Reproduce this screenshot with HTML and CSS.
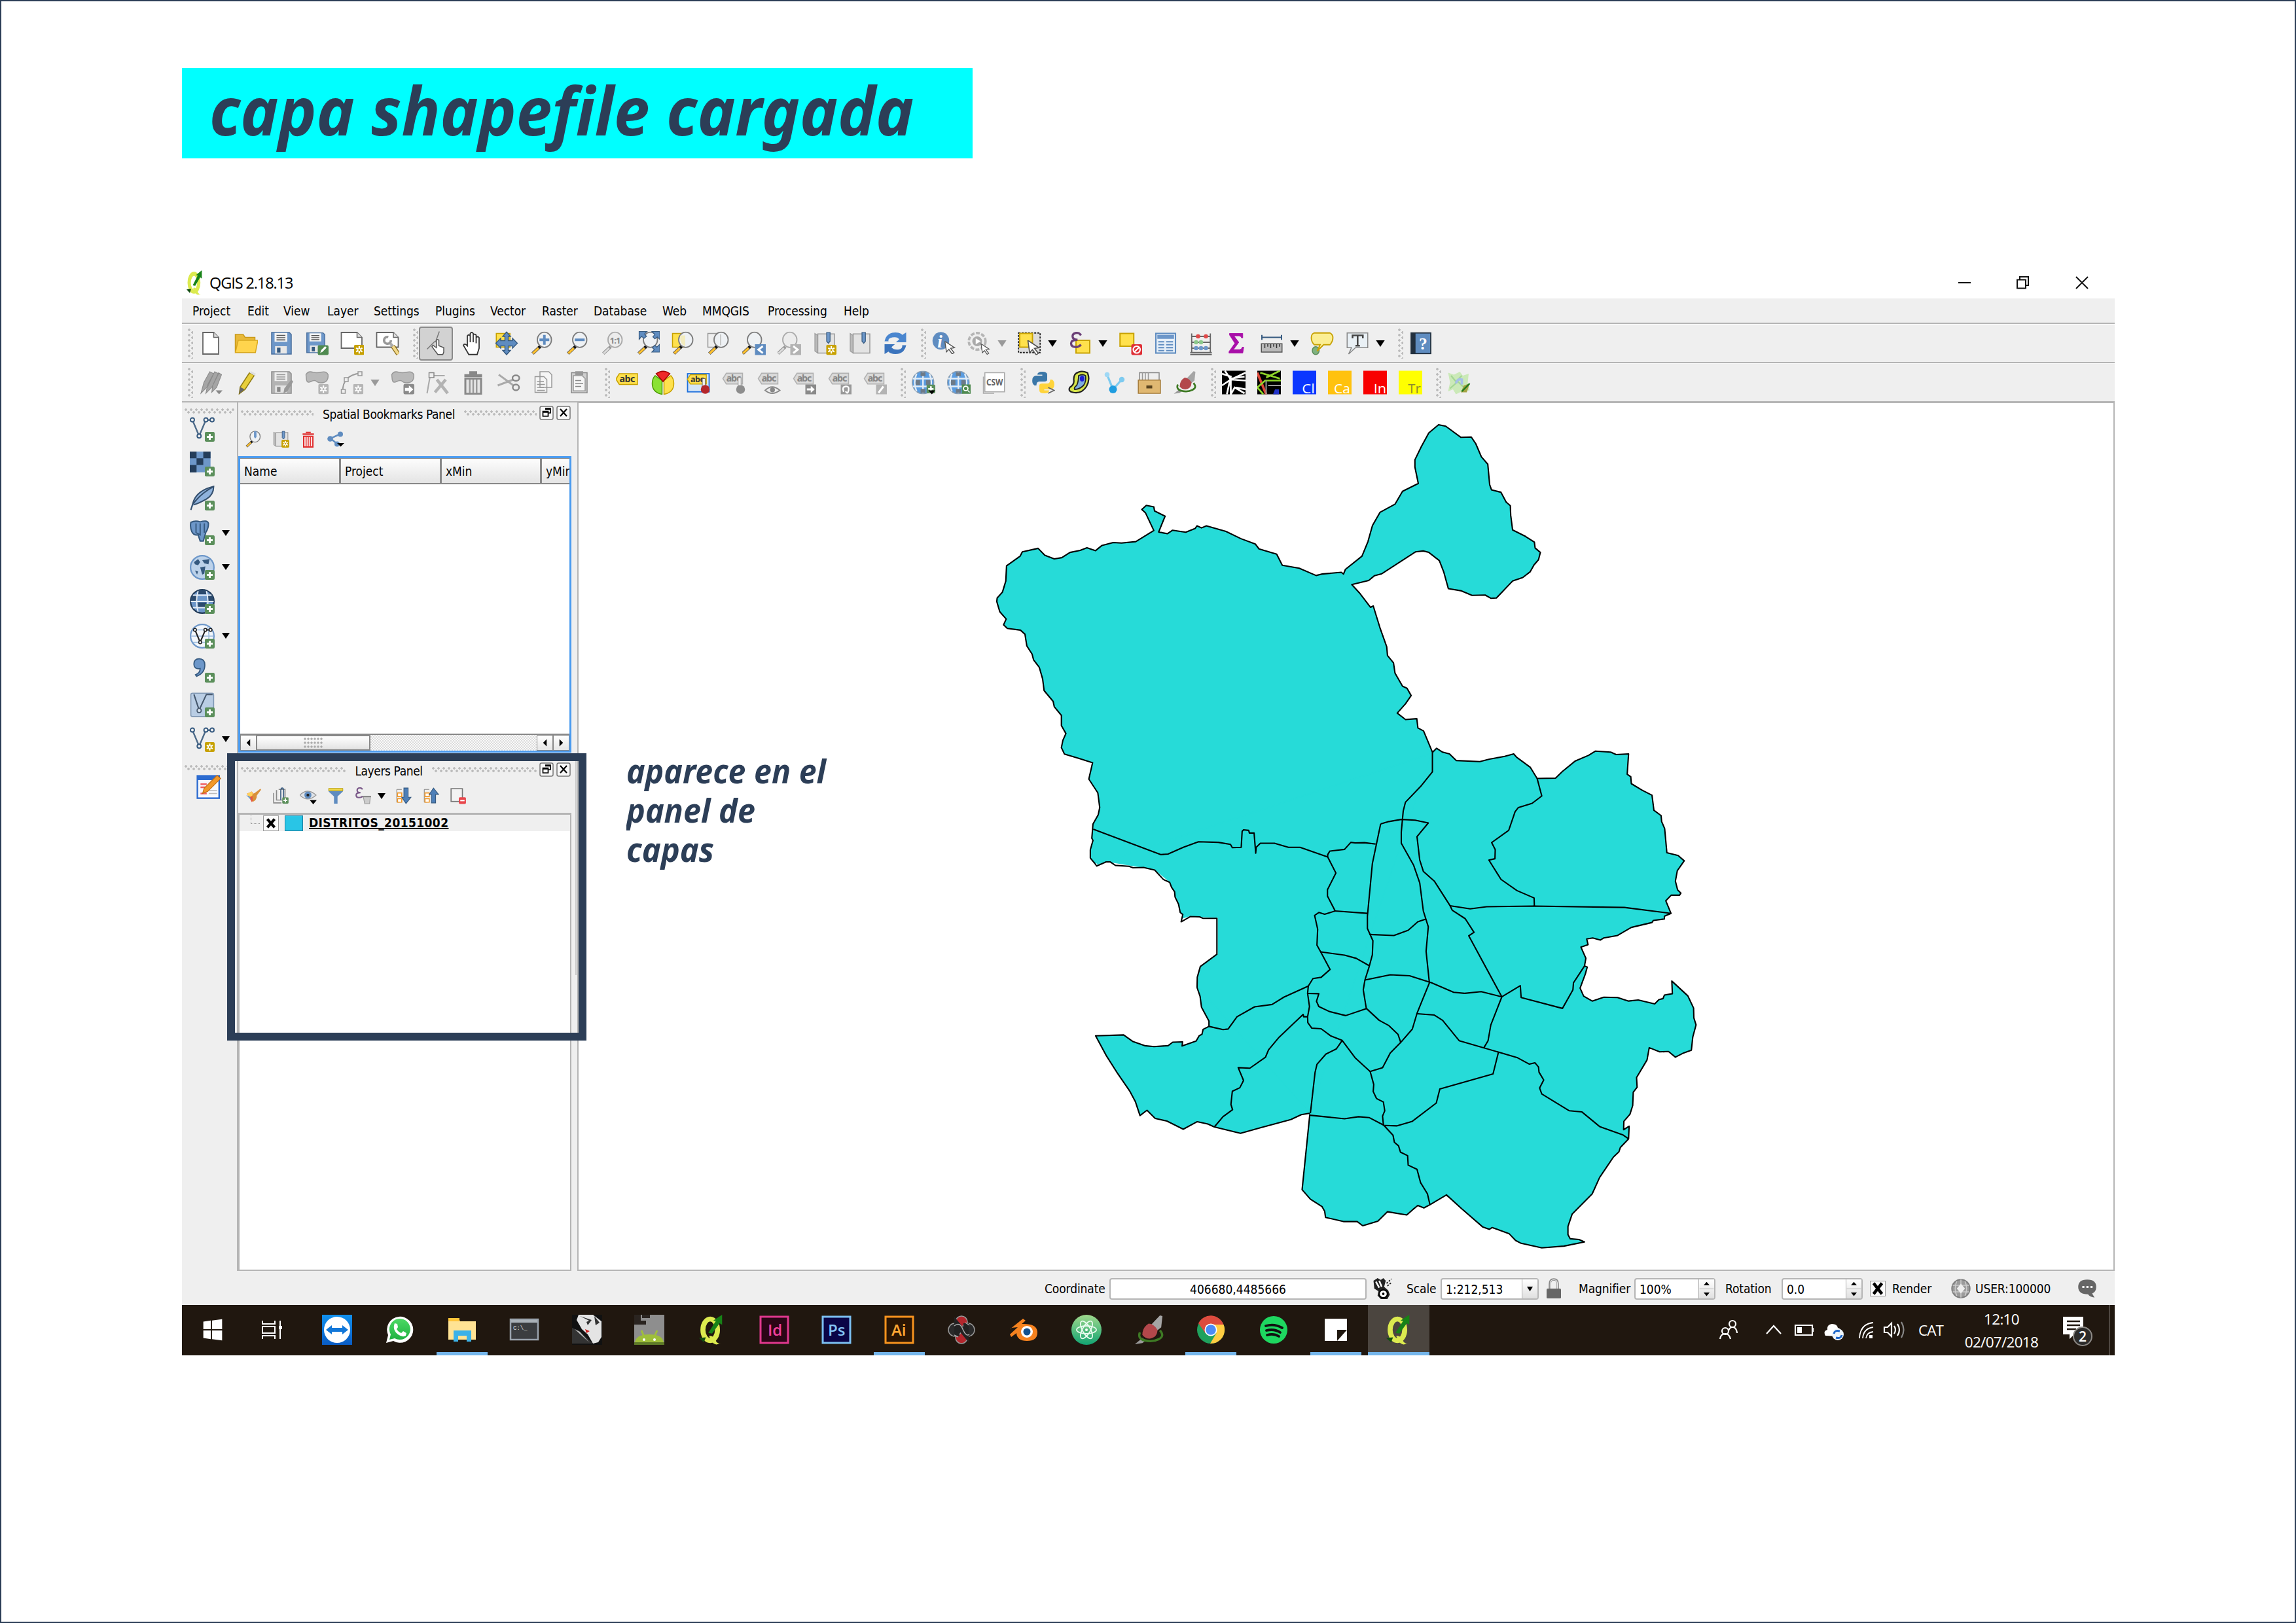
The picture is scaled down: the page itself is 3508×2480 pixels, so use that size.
FILE: index.html
```html
<!DOCTYPE html>
<html lang="es">
<head>
<meta charset="utf-8">
<title>capa shapefile cargada</title>
<link rel="stylesheet" href="styles.css">
</head>
<body>
<svg class="defs" aria-hidden="true">
  <defs>
    <linearGradient id="g-tv" x1="0" y1="0" x2="0" y2="1"><stop offset="0" stop-color="#1191ee"/><stop offset="1" stop-color="#0a5cc4"/></linearGradient>
    <linearGradient id="g-atom" x1="0" y1="0" x2="0" y2="1"><stop offset="0" stop-color="#9fd88c"/><stop offset="1" stop-color="#12a472"/></linearGradient>
    <linearGradient id="g-wa" x1="0" y1="0" x2="0" y2="1"><stop offset="0" stop-color="#4cd964"/><stop offset="1" stop-color="#1fb141"/></linearGradient>
  </defs>
  <symbol id="plus" viewBox="0 0 10 10"><rect width="10" height="10" rx="1.5" fill="#5b8f5b"/><path d="M5 2v6M2 5h6" stroke="#fff" stroke-width="2"/></symbol>
  <symbol id="star" viewBox="0 0 10 10"><rect width="10" height="10" rx="1.5" fill="#c7a100"/><path d="M5 1.500v7M2 3.200l6 3.600M8 3.200L2 6.800" stroke="#fff" stroke-width="1.400"/><circle cx="5" cy="5" r="1" fill="#c7a100"/></symbol>
  <symbol id="star-off" viewBox="0 0 10 10"><rect width="10" height="10" rx="1.5" fill="#b5b5b5"/><path d="M5 1.500v7M2 3.200l6 3.600M8 3.200L2 6.800" stroke="#fff" stroke-width="1.400"/><circle cx="5" cy="5" r="1" fill="#b5b5b5"/></symbol>
  <symbol id="lens" viewBox="0 0 24 24"><path d="M10 15.500L2.500 22.500" stroke="#555" stroke-width="3.400"/><path d="M8.500 17L2.800 22.300" stroke="#fdbf2d" stroke-width="2.200"/><path d="M10.800 14.500l-2 2" stroke="#111" stroke-width="2.800"/><ellipse cx="14.500" cy="8.500" rx="7.200" ry="7.700" fill="#eef1f4" stroke="#7c7c7c" stroke-width="1.200"/></symbol>
  <symbol id="lens-off" viewBox="0 0 24 24"><path d="M10 15.500L2.500 22.500" stroke="#999" stroke-width="3.400"/><path d="M8.500 17L2.800 22.300" stroke="#ddd" stroke-width="1.800"/><ellipse cx="14.500" cy="8.500" rx="7.200" ry="7.700" fill="#ececec" stroke="#aaa" stroke-width="1.200"/></symbol>
  <symbol id="arrowptr" viewBox="0 0 12 12"><path d="M1 0l9 6-3.600.6 3.200 4-1.800 1.200-3-4.200L2.500 10z" fill="#fff" stroke="#555" stroke-width=".9"/></symbol>
  <symbol id="floppy" viewBox="0 0 24 24"><path d="M2 1h18l2 2v20H2z" fill="#6d97c9" stroke="#4a6f9d"/><rect x="5" y="1.500" width="13" height="9" fill="#f4f4f4"/><path d="M7 4h9M7 6.300h9M7 8.600h9" stroke="#555" stroke-width="1.100"/><rect x="5.500" y="15" width="12" height="7.500" fill="#e8e8e8"/><rect x="7.500" y="16.500" width="3.500" height="5" fill="#35597f"/></symbol>
  <symbol id="floppy-off" viewBox="0 0 24 24"><path d="M2 1h18l2 2v20H2z" fill="#b3b3b3" stroke="#8e8e8e"/><rect x="5" y="1.500" width="13" height="9" fill="#eee"/><path d="M7 4h9M7 6.300h9M7 8.600h9" stroke="#999" stroke-width="1.100"/><rect x="5.500" y="15" width="12" height="7.500" fill="#e4e4e4"/><rect x="7.500" y="16.500" width="3.500" height="5" fill="#888"/></symbol>
  <symbol id="tag" viewBox="0 0 24 24"><path d="M1 9.500L4.500 4H23v11H4.500z" fill="#ffe14d" stroke="#c7a100"/><text x="4.600" y="12.700" font-family="Noto Sans" font-weight="700" font-size="9.500" fill="#333" textLength="16">abc</text></symbol>
  <symbol id="tag-off" viewBox="0 0 24 24"><path d="M1 7L4.500 1.500H21v11H4.500z" fill="#dadada" stroke="#b0b0b0"/><text x="4.500" y="10.300" font-family="Noto Sans" font-weight="700" font-size="9.500" fill="#858585" textLength="15">abc</text></symbol>
  <symbol id="wms" viewBox="0 0 24 24"><ellipse cx="11.500" cy="12" rx="11" ry="11.500" fill="#5a9ce0" stroke="#8a9db0"/><path d="M1 8h21M1 16h21M11.500 1v22M5 3q-4 9 0 18M18 3q4 9 0 18" stroke="#e3edf6" stroke-width="1.600" fill="none"/><path d="M4 9.500h4.500v5H4zM14.500 9.500H19v5h-4.500zM9 1.500h5v4H9zM9 18.500h5v4H9z" fill="#6d7a87"/></symbol>
  <symbol id="bookmark" viewBox="0 0 24 24"><path d="M2 2v18l3 2V4z" fill="#bbb" stroke="#999" stroke-width=".8"/><path d="M5 2.500h17v19.500H5z" fill="#e3e3e3" stroke="#999"/><path d="M14 1h3.500v9l-1.700 2-1.800-2z" fill="#6d97c9" stroke="#35597f" stroke-width=".8"/></symbol>
  <symbol id="vee" viewBox="0 0 24 24"><path d="M2.500 3L9 18.500 15.500 3H22" fill="none" stroke="#4d6a88" stroke-width="1.500"/><g fill="#efefef" stroke="#35597f" stroke-width="1.200"><circle cx="2.500" cy="2.800" r="1.900"/><circle cx="15.500" cy="2.800" r="1.900"/><circle cx="21.500" cy="2.800" r="1.900"/><circle cx="9" cy="18.500" r="1.900"/></g></symbol>
  <symbol id="qlogo" viewBox="0 0 24 24"><ellipse cx="11" cy="12" rx="5.800" ry="8.600" fill="none" stroke="#dcea4f" stroke-width="4"/><path d="M10 17q3-1 5 3t5 2.500l-4 1.200q-3-.5-4-3z" fill="#dcea4f"/><path d="M9.500 14.500L15.500 5l-2-.5L20.500 0v8l-2-1.200-6 8.200z" fill="#178217"/><path d="M2 18.500l5.500-.5-1.500 4z" fill="#124d12"/></symbol>
  <symbol id="caret" viewBox="0 0 16 12"><path d="M0 0h16L8 12z" fill="currentColor"/></symbol>
  <symbol id="mana" viewBox="0 0 24 24"><path d="M13 9l8-8.500 2 .5-1 9-5 4z" fill="#a5a5a5"/><path d="M1 23.500l6-5 3 2-3 2z" fill="#999"/><path d="M5 14q-2 5 4 6.500t11-1 1-7" fill="none" stroke="#3e7a24" stroke-width="1.800"/><path d="M7 16q0-6 5-9 4 0 7 5 0 6-6 7-4 0-6-3z" fill="#b3474b"/></symbol>
  <symbol id="floaticon" viewBox="0 0 22 22"><rect x="1" y="1" width="20" height="20" rx="2.500" fill="#f8f8f8" stroke="#777" stroke-width="1.500"/><path d="M9 4h8v7h-3M9 5.500h8M5.500 8.500h8v7.500h-8zM5.500 10h8" fill="none" stroke="#000" stroke-width="1.700"/></symbol>
  <symbol id="closeicon" viewBox="0 0 22 22"><rect x="1" y="1" width="20" height="20" rx="2.500" fill="#f8f8f8" stroke="#777" stroke-width="1.500"/><path d="M6 5l10 11M16 5L6 16" stroke="#000" stroke-width="2.200"/></symbol>
</svg>

<main class="page">
  <h1 class="banner">
    <svg width="1208" height="138"><text x="42" y="103" font-size="103" textLength="1076" lengthAdjust="spacingAndGlyphs">capa shapefile cargada</text></svg>
  </h1>

  <section class="window">
    <header class="titlebar">
      <svg class="logo" viewBox="2 0 19 24" preserveAspectRatio="none"><use href="#qlogo" width="24" height="24"/></svg>
      <span class="title">QGIS 2.18.13</span>
      <svg class="controls" viewBox="0 0 220 40"><g fill="none" stroke="#111" stroke-width="2"><path d="M10 20h19"/><path d="M100 15.500h13v13h-13zM104 15v-4h13v13h-4M190 11l18 18M208 11l-18 18"/></g></svg>
    </header>

    <nav class="menubar">
      <span>Project</span><span>Edit</span><span>View</span><span>Layer</span><span>Settings</span><span>Plugins</span><span>Vector</span><span>Raster</span><span>Database</span><span>Web</span><span>MMQGIS</span><span>Processing</span><span>Help</span>
    </nav>

    <div class="toolbar">
      <i class="grip first"></i>
      <b><svg viewBox="0 0 24 24"><path d="M4 1h11l5 5v17H4z" fill="#fff" stroke="#666" stroke-width="1.200"/><path d="M15 1v5h5" fill="#ddd" stroke="#666"/></svg></b>
      <b><svg viewBox="0 0 24 24"><path d="M1 21V3h8l2 3h10v4" fill="#e8b93a" stroke="#c99a1b"/><path d="M1 21.500L4 9h20l-2.500 12.500z" fill="#ffd44d" stroke="#d9a81f"/></svg></b>
      <b><svg viewBox="0 0 24 24"><use href="#floppy"/></svg></b>
      <b><svg viewBox="0 0 24 24"><use href="#floppy" width="22" height="23"/><rect x="13" y="14" width="11" height="10" rx="1.500" fill="#4f8a50"/><path d="M15.500 22l1-3 4-4 1.500 1.500-4 4z" fill="#fff"/></svg></b>
      <b><svg viewBox="0 0 24 24"><path d="M1 1h16l5 5v11H1z" fill="#fff" stroke="#666" stroke-width="1.200"/><path d="M17 1v5h5" fill="#ddd" stroke="#666"/><use href="#star" x="14" y="13.500" width="10.500" height="10.500"/></svg></b>
      <b><svg viewBox="0 0 24 24"><path d="M1 1h17l5 5v10H1z" fill="#fff" stroke="#666" stroke-width="1.200"/><path d="M18 1v5h5" fill="#ddd" stroke="#666"/><circle cx="12" cy="9" r="3.500" fill="none" stroke="#999" stroke-width="2.500" stroke-dasharray="17 5"/><path d="M15 12.500l3 3" stroke="#aaa" stroke-width="3"/><path d="M17.500 15l5.500 8" stroke="#8a6d1e" stroke-width="4.500"/><path d="M17.500 15l5.500 8" stroke="#f2d98a" stroke-width="2.800"/></svg></b>
      <i class="grip"></i>
      <b class="on"><svg viewBox="0 0 24 24"><path d="M11.500 11l4-11M3 18l8-8" stroke="#777" stroke-width="1"/><path d="M14 23.500l-6-8 1-1.500 3.500 2.500V9q1.300-1.800 2.500 0v5.500l5 2v4.500l-1 2.500z" fill="#fff" stroke="#555" stroke-width="1"/></svg></b>
      <b><svg viewBox="0 0 24 24"><path d="M8 23.500L2.500 14q1-2.500 4 .5V4.500q1.500-2 3 0V11 2q1.500-2 3 0v9-7.500q1.500-1.500 3 .2V12 6q1.600-1.500 3 .3V17l-2 6.500z" transform="translate(1.500)" fill="#fff" stroke="#333" stroke-width="1.200"/></svg></b>
      <b><svg viewBox="0 0 24 24"><rect x="1.500" y="2" width="14" height="14" fill="#ffe14d" stroke="#c7a100"/><path d="M12 .5l4 4.500h-2.300v4.300H18V7l5 5-5 5v-2.300h-4.300v4.500H16l-4 4.500-4-4.500h2.300v-4.500H6V17l-5-5 5-5v2.300h4.300V5H8z" fill="#5f8cc0" stroke="#35597f" stroke-width=".9"/></svg></b>
      <b><svg viewBox="0 0 24 24"><use href="#lens"/><path d="M14.500 3.500v10M9.500 8.500h10" stroke="#5f8cc0" stroke-width="2.600"/></svg></b>
      <b><svg viewBox="0 0 24 24"><use href="#lens"/><path d="M9.500 8.500h10" stroke="#5f8cc0" stroke-width="2.600"/></svg></b>
      <b><svg viewBox="0 0 24 24"><use href="#lens-off"/><text x="9.200" y="12" font-family="Noto Sans" font-weight="700" font-size="8.500" fill="#888" textLength="11">1:1</text></svg></b>
      <b><svg viewBox="0 0 24 24"><use href="#lens"/><path d="M3 0h8L8.500 2.500l2 2.500-2.500 2-2.500-2L3 8zM24 0v8l-2.500-2.500-2.500 2-2-2 2-2.500L16 0zM24 21h-8l2.500-2.500-2-2 2.500-2.500 2 2L24 13z" fill="#5f8cc0" stroke="#35597f" stroke-width=".8"/></svg></b>
      <b><svg viewBox="0 0 24 24"><rect x="1" y="2" width="12" height="14" fill="#ffe14d" stroke="#c7a100"/><use href="#lens"/><path d="M9 4h5v11q-6-2-5-11z" fill="#f3ecbe"/></svg></b>
      <b><svg viewBox="0 0 24 24"><rect x="1" y="2" width="12" height="14" fill="#eee" stroke="#999"/><use href="#lens"/><path d="M14 3v11" stroke="#bbb"/></svg></b>
      <b><svg viewBox="0 0 24 24"><use href="#lens" x="-2"/><rect x="13" y="13" width="11" height="11" fill="#5f8cc0"/><path d="M21 15l-4.500 3.500L21 22" fill="none" stroke="#fff" stroke-width="2"/></svg></b>
      <b><svg viewBox="0 0 24 24"><use href="#lens-off" x="-2"/><rect x="13" y="13" width="11" height="11" fill="#b3b3b3"/><path d="M16 15l4.500 3.500L16 22" fill="none" stroke="#fff" stroke-width="2"/></svg></b>
      <b><svg viewBox="0 0 24 24"><use href="#bookmark"/><use href="#star" x="13.500" y="13.500" width="10.500" height="10.500"/></svg></b>
      <b><svg viewBox="0 0 24 24"><use href="#bookmark"/></svg></b>
      <b><svg viewBox="0 0 24 24"><path d="M1 10Q3 1 12 1q5 0 7 2.500L23 1v10H12.500l3.500-3Q14 5 9 6t-4 4z" fill="#4a86cf"/><path d="M23 14q-2 9-11 9-5 0-7-2.500L1 23V13h10.500L8 16q2.500 3 7 2.500t4-4.500z" fill="#3b74bd"/></svg></b>
      <i class="grip"></i>
      <b><svg viewBox="0 0 24 24"><ellipse cx="9" cy="9.500" rx="8.500" ry="9" fill="#5f8cc0"/><text x="5.500" y="16" font-family="Liberation Serif" font-style="italic" font-weight="700" font-size="18" fill="#fff">i</text><use href="#arrowptr" x="12" y="10" width="13" height="13"/></svg></b>
      <b><svg viewBox="0 0 24 24"><circle cx="10" cy="10" r="8.500" fill="none" stroke="#b5b5b5" stroke-width="2.500" stroke-dasharray="4 1.500"/><circle cx="10" cy="10" r="5" fill="#aaa"/><path d="M8.500 7l5 3-5 3z" fill="#fff"/><use href="#arrowptr" x="13" y="12" width="11" height="12"/></svg></b>
      <u class="off"><svg><use href="#caret"/></svg></u>
      <b><svg viewBox="0 0 24 24"><rect x=".8" y="1.500" width="22" height="20" fill="#ddd" stroke="#222" stroke-width="1.200" stroke-dasharray="2 1.200"/><rect x="2" y="2" width="13" height="14" fill="#ffe14d" stroke="#c7a100" stroke-width="1.300"/><use href="#arrowptr" x="9" y="9" width="15" height="15"/></svg></b>
      <u><svg><use href="#caret"/></svg></u>
      <b><svg viewBox="0 0 24 24"><rect x="8" y="9" width="14" height="13" fill="#ffe14d" stroke="#c7a100" stroke-width="1.300"/><path d="M13 4q-1.500-3-5-2.500T4.500 5t5 3.500Q3 8.500 3 12t4 3.800 6-2.500" fill="none" stroke="#6b3f77" stroke-width="2.200"/></svg></b>
      <u><svg><use href="#caret"/></svg></u>
      <b><svg viewBox="0 0 24 24"><rect x="1.500" y="2" width="14" height="13" fill="#ffe14d" stroke="#c7a100" stroke-width="1.300"/><rect x="13" y="13" width="11" height="11" rx="1.500" fill="#df2f36"/><circle cx="18.500" cy="18.500" r="3.500" fill="none" stroke="#fff" stroke-width="1.400"/><path d="M16 21l5-5" stroke="#fff" stroke-width="1.400"/></svg></b>
      <b><svg viewBox="0 0 24 24"><rect x="2" y="2" width="20" height="20" fill="#e6eff8" stroke="#5f8cc0" stroke-width="1.400"/><rect x="3.500" y="3.500" width="17" height="4" fill="#6d97c9"/><path d="M4.500 10.500h6M12.500 10.500h7M4.500 13.500h6M12.500 13.500h7M4.500 16.500h6M12.500 16.500h7M4.500 19.500h6M12.500 19.500h7" stroke="#5f8cc0" stroke-width="1.300"/></svg></b>
      <b><svg viewBox="0 0 24 24"><path d="M2.500 2v19M21.500 2v19M2 5h20M2 11h20M2 17h20M1 21.500h22M1 23.500h22" stroke="#666" stroke-width="1.200"/><g fill="#e04a4a"><circle cx="9" cy="5" r="2.200"/><circle cx="17" cy="5" r="2.200"/></g><g fill="#8cc98c"><circle cx="7" cy="11" r="2.200"/><circle cx="12" cy="11" r="2.200"/></g><g fill="#6d97c9"><circle cx="7" cy="17" r="2.200"/><circle cx="12" cy="17" r="2.200"/><circle cx="17" cy="17" r="2.200"/></g></svg></b>
      <b><svg viewBox="0 0 24 24"><path d="M5 2h13.500v4.500h-1.200Q17 4.500 14.500 4.500H9.500L14.500 11 9 18.500h6q2.500 0 3-2.500h1.500L18.500 22H4.500v-1.500L10.500 12 5 3.500z" fill="#a80fa8" stroke="#a80fa8" stroke-width=".6"/></svg></b>
      <b><svg viewBox="0 0 24 24"><path d="M2 6h20M2 3.500v5M22 3.500v5" stroke="#35597f" stroke-width="1.300"/><rect x="1.500" y="12.500" width="21" height="8.500" fill="#bbb" stroke="#555"/><path d="M5 13v4M8 13v2.500M11 13v4M14 13v2.500M17 13v4M20 13v2.500" stroke="#333"/></svg></b>
      <u><svg><use href="#caret"/></svg></u>
      <b><svg viewBox="0 0 24 24"><ellipse cx="5.500" cy="19.500" rx="3.500" ry="4" fill="#7fb27f" stroke="#5a8c5a"/><path d="M4 1.500h16q3 1.500 3 5t-3 7h-6.500L7 20l3-6.500H4q-3-3-3-7t3-5z" fill="#fbee94" stroke="#c7a100" stroke-width="1.200"/></svg></b>
      <b><svg viewBox="0 0 24 24"><path d="M1.500 1.500h21v15H10L3 23l3-6.500H1.500z" fill="#e9f0f5" stroke="#888"/><path d="M7 7V4h10.500v3M12.200 4v10.500M10 14.500h4.500" fill="none" stroke="#444" stroke-width="1.700"/></svg></b>
      <u><svg><use href="#caret"/></svg></u>
      <i class="grip"></i>
      <b><svg viewBox="0 0 24 24"><rect x="2" y="1.500" width="20" height="21" fill="#5f8cc0" stroke="#22303f" stroke-width="1.200"/><rect x="2" y="1.500" width="4.500" height="21" fill="#22303f"/><text x="10" y="18" font-family="Liberation Serif" font-weight="700" font-size="17" fill="#fff">?</text></svg></b>
    </div>

    <div class="toolbar">
      <i class="grip first"></i>
      <b><svg viewBox="0 0 24 24"><path d="M2 23L5 12 11 1l4 2-6 13zM7 23l2-9 7-13 4 2-7 14zM13 22l1-7 6-13 3 2-5 13z" fill="#a5a5a5" stroke="#8a8a8a" stroke-width=".7"/><path d="M17 20h7l-3.500 4z" fill="#888"/></svg></b>
      <b><svg viewBox="0 0 24 24"><path d="M5 23.500l1-7L15.500 2l5 2.500L11 19z" fill="#e8cf3c" stroke="#8f7a12"/><path d="M15.500 2L17 .5l5 2.500-1.500 2z" fill="#ddd"/><path d="M5 23.500l1-7 4.500 2.500z" fill="#666"/></svg></b>
      <b><svg viewBox="0 0 24 24"><use href="#floppy-off"/><path d="M14 23l1-5 7-9 2 2-6 10z" fill="#999"/></svg></b>
      <b><svg viewBox="0 0 24 24"><path d="M1 4Q3 0 8 1.500q4 1 8 0 6-1.500 7.500 2.500.5 7-4.500 8t-7-1-6 0T1.500 9z" fill="#b9b9b9" stroke="#999"/><use href="#star-off" x="13.500" y="13.500" width="10.500" height="10.500"/></svg></b>
      <b><svg viewBox="0 0 24 24"><path d="M2.500 21Q2 5 20 2.500" fill="none" stroke="#999" stroke-width="1.300"/><g fill="#eee" stroke="#999"><rect x="18" y="1" width="4" height="4"/><rect x="4" y="7" width="4" height="4"/><rect x="1" y="19" width="4" height="4"/></g><use href="#star-off" x="13" y="13.500" width="10.500" height="10.500"/></svg></b>
      <u class="off"><svg><use href="#caret"/></svg></u>
      <b><svg viewBox="0 0 24 24"><path d="M1 4Q3 0 8 1.500q4 1 8 0 6-1.500 7.500 2.500.5 7-4.500 8t-7-1-6 0T1.500 9z" fill="#b9b9b9" stroke="#999"/><rect x="13" y="13.500" width="11" height="10.500" rx="1.500" fill="#8a8a8a"/><path d="M14.500 17.500h4V15l4.500 4-4.500 4v-2.500h-4z" fill="#fff"/></svg></b>
      <b><svg viewBox="0 0 24 24"><path d="M1 23L4 6M7 5h12" stroke="#aaa" stroke-width="1.400"/><rect x="3" y="2" width="5" height="5" fill="#eee" stroke="#888"/><path d="M9 22L20 9M11 9l11 14" stroke="#b3b3b3" stroke-width="3"/></svg></b>
      <b><svg viewBox="0 0 24 24"><path d="M3 5h18M8 2h8" stroke="#888" stroke-width="3"/><path d="M4 8h16v15.500H4z" fill="#e5e5e5" stroke="#888" stroke-width="2"/><path d="M8.500 9v14M12 9v14M15.500 9v14" stroke="#999" stroke-width="1.600"/></svg></b>
      <b><svg viewBox="0 0 24 24"><path d="M2 4l15 11M1 15l16-6" stroke="#aaa" stroke-width="2"/><ellipse cx="19.500" cy="7.500" rx="3.500" ry="2.800" fill="none" stroke="#888" stroke-width="1.600"/><ellipse cx="19.500" cy="17" rx="3.200" ry="3" fill="none" stroke="#888" stroke-width="1.600"/></svg></b>
      <b><svg viewBox="0 0 24 24"><path d="M8 1h9l3 3v13H8zM3 6h9l3 3v13H3z" fill="#f5f5f5" stroke="#999"/><path d="M5 11h7M5 14h8M5 17h7M5 20h8" stroke="#999"/></svg></b>
      <b><svg viewBox="0 0 24 24"><rect x="4" y="2" width="16" height="20.500" fill="#cfcfcf" stroke="#888"/><path d="M6 5h9l3 3v12.500H6z" fill="#f5f5f5" stroke="#999"/><rect x="8" y=".5" width="8" height="4" fill="#999"/><path d="M8 10h6M8 13h8M8 16h6" stroke="#888"/></svg></b>
      <i class="grip"></i>
      <b><svg viewBox="0 0 24 24"><use href="#tag" x="-1" y="-1"/></svg></b>
      <b><svg viewBox="0 0 24 24"><path d="M11 10v14Q1 22 1 13q0-5 3-8z" fill="#8ae234" stroke="#4e9a06"/><path d="M13 10v14q10-2 10-11 0-5-3-8z" fill="#ffe14d" stroke="#c7a100"/><path d="M12 11L5 3q7-5 14 0z" fill="#ef2929" stroke="#a40000"/></svg></b>
      <b><svg viewBox="0 0 24 24"><rect x="1" y="3" width="22" height="18.500" fill="#d4e4f5" stroke="#1d6fdc" stroke-width="1.200"/><use href="#tag" y="0" width="21" height="22"/><rect x="16" y="8" width="3" height="8" fill="#eee" stroke="#666" stroke-width=".7"/><ellipse cx="19" cy="19" rx="4.500" ry="4.500" fill="#b5262b"/></svg></b>
      <b><svg viewBox="0 0 24 24"><use href="#tag-off" y="1"/><ellipse cx="19" cy="19" rx="4.500" ry="4.500" fill="#8d8d8d"/><rect x="16.500" y="7" width="3" height="8" fill="#eee" stroke="#999" stroke-width=".7"/></svg></b>
      <b><svg viewBox="0 0 24 24"><use href="#tag-off" y="1"/><path d="M8 20q7-7 15 0-8 6-15 0z" fill="#eee" stroke="#888" stroke-width="1.300"/><circle cx="15.500" cy="19.500" r="2.500" fill="#888"/></svg></b>
      <b><svg viewBox="0 0 24 24"><use href="#tag-off" y="1"/><rect x="13" y="14" width="11" height="10" fill="#8a8a8a"/><path d="M14.500 18h4v-2.500l4 3.500-4 3.500V20h-4z" fill="#fff"/></svg></b>
      <b><svg viewBox="0 0 24 24"><use href="#tag-off" y="1"/><rect x="13" y="14" width="11" height="10" fill="#999"/><path d="M16 21.500q-2-5 2-5.500t3 4-3 1" fill="none" stroke="#fff" stroke-width="1.600"/></svg></b>
      <b><svg viewBox="0 0 24 24"><use href="#tag-off" y="1"/><rect x="13" y="14" width="11" height="10" fill="#b3b3b3"/><path d="M15.500 22.500l5-6.500" stroke="#fff" stroke-width="2"/></svg></b>
      <i class="grip"></i>
      <b><svg viewBox="0 0 24 24"><use href="#wms"/><use href="#plus" x="15" y="14" width="9" height="9"/><path d="M17 20h7l-3.500 4z"/></svg></b>
      <b><svg viewBox="0 0 24 24"><use href="#wms"/><rect x="15" y="14" width="9" height="9.500" fill="#4f8a50"/><circle cx="19" cy="18" r="2.300" fill="none" stroke="#fff" stroke-width="1.200"/><path d="M21 20l2 2" stroke="#fff"/></svg></b>
      <b><svg viewBox="0 0 24 24"><path d="M1 6v17h11" fill="none" stroke="#aaa"/><rect x="2.500" y="2" width="20" height="19.500" fill="#fff" stroke="#aaa"/><text x="4" y="15" font-family="Noto Sans" font-weight="700" font-size="9.500" fill="#666" textLength="17" lengthAdjust="spacingAndGlyphs">CSW</text></svg></b>
      <i class="grip wide"></i>
      <b><svg viewBox="0 0 24 24"><path d="M11 1q5 0 5 3v5q0 2-3 2H8q-3 0-3 4H3q-3-2-2-7 1-3 4-3h6V4H6q0-3 5-3z" fill="#3b77a8"/><path d="M13 23q-5 0-5-3v-5q0-2 3-2h5q3 0 3-4h2q3 2 2 7-1 3-4 3h-6v1h5q0 3-5 3z" fill="#ffd43b"/><path d="M17 17l6 3-6 3" fill="none" stroke="#666" stroke-width="1.200"/></svg></b>
      <b><svg viewBox="0 0 24 24"><path d="M9 3q5-4 12-1 3 7-1 14-5 8-14 6-5-1-3-5 5-3 4-8 0-4 2-6z" fill="#d8e64b" stroke="#222" stroke-width="1.500"/><path d="M12 5q4-2 7 0 1 6-2 10-4 4-9 4-1-2 2-4 2-4 2-10z" fill="#7faee0" stroke="#222" stroke-width="1.200"/><ellipse cx="15.500" cy="8" rx="2.200" ry="3" fill="#1f1fd0"/></svg></b>
      <b><svg viewBox="0 0 24 24"><path d="M5 4l6 15 8-9" fill="none" stroke="#7ecbf0" stroke-width="2.200"/><circle cx="5" cy="4" r="2.500" fill="#9fd8f5"/><circle cx="20" cy="9" r="2.800" fill="#7ecbf0"/><circle cx="11" cy="19" r="4" fill="#1f9de0"/></svg></b>
      <b><svg viewBox="0 0 24 24"><path d="M2 11V2h20v9z" fill="#eee" stroke="#888"/><path d="M5 2v8M8 2v8M11 2v8" stroke="#999"/><rect x=".8" y="9.500" width="22.500" height="13.500" fill="#e0b872" stroke="#a57c3a"/><rect x="9" y="15" width="6" height="3" fill="#5a4420"/></svg></b>
      <b><svg viewBox="0 0 24 24"><use href="#mana"/></svg></b>
      <i class="grip wide"></i>
      <b><svg viewBox="0 0 24 24"><path d="M0 0h24v24H0z"/><path d="M0 3l9 3L5 24M3 0l6 9 15-7M9 8l14-2M9 9l15 1M0 15l9-6v15l4-7 10 6M14 17l10 2" stroke="#fff" stroke-width="1.800" fill="none"/></svg></b>
      <b><svg viewBox="0 0 24 24"><path d="M0 0h24v24H0z"/><path d="M0 2l9 22" stroke="#e0483a" stroke-width="2.500"/><path d="M3 2l20 6M9 7l14-7M24 10H8L0 17l6 7" stroke="#8fd62a" stroke-width="1.800" fill="none"/><path d="M9 10v14M24 15H11" stroke="#999" stroke-width="1.300"/><path d="M16 24l2-5h4v5z" fill="#2233c8"/></svg></b>
      <b><svg class="tile" viewBox="0 0 24 24"><path d="M0 0h24v24H0z" fill="#0a36ff"/><text x="9.500" y="22.800" textLength="13" lengthAdjust="spacingAndGlyphs">Cl</text></svg></b>
      <b><svg class="tile" viewBox="0 0 24 24"><path d="M0 0h24v24H0z" fill="#ffc20e"/><text x="6" y="22.800" textLength="16.500" lengthAdjust="spacingAndGlyphs">Ca</text></svg></b>
      <b><svg class="tile" viewBox="0 0 24 24"><path d="M0 0h24v24H0z" fill="#f80000"/><text x="10.500" y="22.800" textLength="13" lengthAdjust="spacingAndGlyphs">In</text></svg></b>
      <b><svg class="tile" viewBox="0 0 24 24"><path d="M0 0h24v24H0z" fill="#ff0"/><text class="dim" x="9.500" y="22.800" textLength="13" lengthAdjust="spacingAndGlyphs">Tr</text></svg></b>
      <i class="grip"></i>
      <b><svg viewBox="0 0 24 24"><path d="M1 2l6 2 6-3 3 4 6-2-1 9 2 8-8 1-6 3-3-5-5 2 2-9z" fill="#cbe9b8"/><path d="M4 5l5 6 6-6M3 18l8-7 8 8" stroke="#a4d694" stroke-width="1.500" fill="none"/><path d="M9 13q1-5 6-4v5" stroke="#a7bfe8" stroke-width="2.500" fill="none"/><path d="M14 22l3-7 6-2-3 9z" fill="#a5a545"/><path d="M15 21l8-8" stroke="#1d7a1d" stroke-width="1.600"/></svg></b>
    </div>

    <div class="workspace">
      <aside class="sidebar">
        <i class="hgrip"></i>
        <div><svg viewBox="0 0 24 24"><use href="#vee"/><use href="#plus" x="14.500" y="14.500" width="9.500" height="9.500"/></svg></div>
        <div><svg viewBox="0 0 24 24"><path d="M0 0h20v20H0z" fill="#6d97c9"/><path d="M0 0h6.500v6.500H0zM13 0h7v6.500h-7zM6.500 6.500H13V13H6.500zM0 13h6.500v7H0z" fill="#243d5a"/><use href="#plus" x="14.500" y="14.500" width="9.500" height="9.500"/></svg></div>
        <div><svg viewBox="0 0 24 24"><path d="M1 23.500L3 17Q6 5 23 .8 23 9 16 13T4 18.500" fill="#8fb2dc" stroke="#35506e" stroke-width="1.300"/><path d="M22 1.500Q10 8 3 18" fill="none" stroke="#35506e" stroke-width="1.300"/><use href="#plus" x="14.500" y="14.500" width="9.500" height="9.500"/></svg></div>
        <div><svg viewBox="0 0 24 24"><path d="M1 2q4-2 9-.5 7-2 8 1.500 0 5-2.500 8.500L13 20h-3l-2-6q-4 1-6-3Q0 7 1 2z" fill="#6d97c9" stroke="#35597f" stroke-width="1.300"/><path d="M6 3v9l4 2V3M14 3v9" fill="none" stroke="#35597f" stroke-width="1.200"/><use href="#plus" x="14.500" y="14.500" width="9.500" height="9.500"/></svg><svg class="car"><use href="#caret"/></svg></div>
        <div><svg viewBox="0 0 24 24"><circle cx="12" cy="12" r="11.300" fill="#bcd2ea" stroke="#6d97c9" stroke-width="1.400"/><path d="M4 7l4-3 2 3-2 3-3-1zM12 5l7-1-1 5-4-1zM10 12l5-1-1 7-2 1zM5 15l3 1-1 3z" fill="#35597f"/><use href="#plus" x="14.500" y="14.500" width="9.500" height="9.500"/></svg><svg class="car"><use href="#caret"/></svg></div>
        <div><svg viewBox="0 0 24 24"><circle cx="12" cy="12" r="11.300" fill="#6d97c9" stroke="#243d5a" stroke-width="1.400"/><path d="M2 6h5v6H1zM17 6h5l1 6h-6zM8 13h8v5H8zM8 1h8v4H8z" fill="#2b4a6d"/><path d="M1 12h22M3 6h18M3 18h18M8 2q-3 10 0 20M16 2q3 10 0 20" stroke="#e6eef7" stroke-width="1.200" fill="none"/><use href="#plus" x="14.500" y="14.500" width="9.500" height="9.500"/></svg></div>
        <div><svg viewBox="0 0 24 24"><circle cx="12" cy="12" r="11.300" fill="#f3f7fb" stroke="#6d97c9" stroke-width="1.400"/><path d="M1 12h22M3 6h18M3 18h18M17 2q3 10 0 20" stroke="#9dbbdd" fill="none"/><path d="M5 6l5 12 5-12h5" fill="none" stroke="#222" stroke-width="1.300"/><g fill="#fff" stroke="#222"><circle cx="5" cy="6" r="1.400"/><circle cx="15" cy="6" r="1.400"/><circle cx="20" cy="6" r="1.400"/><circle cx="10" cy="18" r="1.400"/></g><use href="#plus" x="14.500" y="14.500" width="9.500" height="9.500"/></svg><svg class="car"><use href="#caret"/></svg></div>
        <div><svg viewBox="0 0 24 24"><path d="M9 1q5.500 0 5.500 6 0 8-8 11l-1-1.500q4.500-2 4.500-6-6 1-6-4.500Q4 1 9 1z" fill="#6d97c9" stroke="#35597f" stroke-width="1.100"/><use href="#plus" x="14.500" y="14.500" width="9.500" height="9.500"/></svg></div>
        <div><svg viewBox="0 0 24 24"><rect x="1" y=".8" width="22" height="22.500" rx="1.500" fill="#b9cde4" stroke="#7f97b3"/><path d="M4 2l5 15 7-15h6" fill="none" stroke="#44566b" stroke-width="1.300"/><circle cx="9" cy="17.500" r="2" fill="#dce7f2" stroke="#44566b"/><use href="#plus" x="14.500" y="14.500" width="9.500" height="9.500"/></svg></div>
        <div><svg viewBox="0 0 24 24"><use href="#vee"/><use href="#star" x="14.500" y="14.500" width="9.500" height="9.500"/></svg><svg class="car"><use href="#caret"/></svg></div>
        <i class="hgrip"></i>
        <div class="notes"><svg viewBox="0 0 24 24"><rect x="1" y="1" width="21" height="21.500" fill="#f6f8fc" stroke="#2c6bd0" stroke-width="1.500"/><path d="M1 1h21v4H1z" fill="#2c6bd0"/><path d="M4 9h6M4 12h5M4 18h6" stroke="#f06060" stroke-width="1.600"/><path d="M12 15h8M12 18h8" stroke="#bbb"/><path d="M6 18l1.500-5L20 .5l3.500 3L11 16z" fill="#f0982a" stroke="#c06a10" stroke-width=".7"/></svg></div>
      </aside>

      <div class="dock">
        <section class="panel bookmarks">
          <header><i class="dots"></i><span>Spatial Bookmarks Panel</span><i class="dots"></i><svg class="pb"><use href="#floaticon"/></svg><svg class="pb"><use href="#closeicon"/></svg></header>
          <div class="ptools">
            <svg viewBox="0 0 24 24"><use href="#lens"/><path d="M13 1h3.500v8l-1.700 2L13 9z" fill="#6d97c9"/></svg>
            <svg viewBox="0 0 24 24"><use href="#bookmark"/><use href="#star" x="13" y="13" width="11" height="11"/></svg>
            <svg viewBox="0 0 24 24"><path d="M4 5h16M8.500 2.500h7" stroke="#e02a2a" stroke-width="2"/><path d="M5.500 8h13v15h-13z" fill="#fbdcdc" stroke="#e02a2a" stroke-width="1.800"/><path d="M9 9v13M12 9v13M15 9v13" stroke="#e02a2a" stroke-width="1.200"/></svg>
            <svg viewBox="0 0 26 24"><path d="M20 4L5 11l11 9" fill="none" stroke="#5f8cc0" stroke-width="2.500"/><g fill="#5f8cc0"><circle cx="20" cy="4.500" r="4"/><circle cx="4.500" cy="11.500" r="4.300"/><circle cx="15" cy="19.500" r="4"/></g><path d="M15 18h11l-5.500 5.500z"/></svg>
          </div>
          <div class="table">
            <div class="thead"><span>Name</span><span>Project</span><span>xMin</span><span>yMin</span></div>
            <div class="tbody"></div>
            <div class="scroll"><svg class="sb" viewBox="0 0 24 24"><path d="M15 6v12L9 12z"/></svg><i class="thumb"><em></em></i><i class="track"></i><svg class="sb" viewBox="0 0 24 24"><path d="M15 6v12L9 12z"/></svg><svg class="sb" viewBox="0 0 24 24"><path d="M9 6v12l6-6z"/></svg></div>
          </div>
        </section>

        <section class="panel layers">
          <header><i class="dots"></i><span>Layers Panel</span><i class="dots"></i><svg class="pb"><use href="#floaticon"/></svg><svg class="pb"><use href="#closeicon"/></svg></header>
          <div class="ptools">
            <svg viewBox="0 0 24 24"><path d="M3 9l7-3 5 7-5 8z" fill="#e9573f"/><path d="M3 9l7-3 3 5-7 3z" fill="#ffd25a"/><path d="M2 11l5 2 2 5z" fill="#6d97c9"/><path d="M11 15q-2-6 3-7l8-6 1 1.500-6 8q0 7-6 9z" fill="#d9903a"/></svg>
            <svg viewBox="0 0 24 24"><path d="M2 8v14h11M6 4v14h11M9 3h9v12" fill="none" stroke="#8a8a8a" stroke-width="1.500"/><path d="M12 18V5q0-4 2-4t2 4v10" fill="none" stroke="#35597f" stroke-width="1.500"/><use href="#plus" x="14" y="14" width="9" height="9"/></svg>
            <svg viewBox="0 0 24 24"><path d="M0 11Q11 0 23 11 11 22 0 11z" fill="#dfe3e8" stroke="#999" stroke-width="1.200"/><circle cx="11.500" cy="11" r="5" fill="#5f8cc0"/><circle cx="11.500" cy="11" r="2" fill="#222"/><path d="M14 18h10l-5 6z"/></svg>
            <svg viewBox="0 0 24 24"><path d="M2 3h20v3l-7.500 7v10h-5V13L2 6z" fill="#5f8cc0"/><path d="M2 1.500h20V5H2z" fill="#f0d94a" stroke="#b59a10" stroke-width=".8"/></svg>
            <svg viewBox="0 0 24 24"><path d="M11 3Q9 0 6 1T3.500 5 8 7.500Q2 7.500 2 11t4 3.500 5-2" fill="none" stroke="#7b5a8a" stroke-width="2"/><path d="M12 13h10l-1 10h-7z" fill="#ccc" stroke="#999"/><path d="M11 13h12" stroke="#888" stroke-width="2"/></svg>
            <svg class="car"><use href="#caret"/></svg>
            <svg viewBox="0 0 24 24"><path d="M3 3v18M3 3h7M3 21h4" stroke="#888" fill="none"/><path d="M4 8h6v5H4zM4 16h6v5H4z" fill="#fff" stroke="#f39a2a" stroke-width="1.500"/><path d="M13 1h6v13h4l-7 9-6-9h3z" fill="#4d7fb8" stroke="#35597f"/></svg>
            <svg viewBox="0 0 24 24"><path d="M3 3v18M3 3h7M3 21h4" stroke="#888" fill="none"/><path d="M4 8h6v5H4zM4 16h6v5H4z" fill="#fff" stroke="#f39a2a" stroke-width="1.500"/><path d="M13 22h6V10h4L16 1l-6 9h3z" fill="#4d7fb8" stroke="#35597f"/></svg>
            <svg viewBox="0 0 24 24"><rect x="2" y="2" width="16" height="18" fill="#f3f3f3" stroke="#777" stroke-width="1.500"/><rect x="13" y="14" width="10" height="9.500" rx="1.500" fill="#e8474c"/><path d="M15 18.700h6" stroke="#fff" stroke-width="2"/></svg>
          </div>
          <div class="tree">
            <div class="layer"><i class="branch"></i><span class="check"><svg viewBox="0 0 24 24"><path d="M6 5l12 14M18 5L6 19" stroke="#000" stroke-width="4.500"/></svg></span><i class="swatch"></i><span class="lname">DISTRITOS_20151002</span></div>
          </div>
        </section>
      </div>

      <div class="canvas">
        <svg viewBox="884 616 2345 1324" width="2345" height="1324">
          <path class="core" d="M2189 1150L2001 1702 1831 1510 1832 1492 1836 1478 1862 1459V1401L1838 1400 1820 1398 1806 1402 1800 1375 1787 1346 1764 1327 1725 1321 1690 1315 1676 1320z"/>
          <!-- north -->
          <g class="land" transform="translate(1500 620) scale(.57399 .44643)">
            <path d="M302 1568L289 1548V1520L296 1488 293 1480 296 1432 310 1400 314 1375 309 1325 285 1278 295 1222 258 1207 220 1192 212 1170 216 1145 224 1122 212 1095V1060L193 1030 190 1012 166 975 162 935 153 895 138 870 134 850 120 822 115 782 103 768 68 762 58 750 65 730 48 705 40 670 41 658 55 638 64 600 66 548 102 515 108 500 150 488 168 512 193 524 213 520 235 502 262 495 280 486 303 496 320 478 350 468 372 470 410 465 458 427 436 367 426 355 438 341 458 346 460 360 488 378 471 432 494 438 508 426 543 433 568 420 573 411 585 418 598 411 650 430 690 455 728 473 738 490 785 508 800 546 845 556 890 581 905 576 957 570 963 576 968 560 1012 515 1028 465 1040 410 1060 365 1100 337 1120 293 1162 266 1153 210V185L1170 140 1190 93 1216 65 1235 70 1275 108 1303 107 1315 130 1330 175 1347 200 1352 270 1357 288 1382 296 1396 330 1407 342 1408 375 1413 425 1447 447 1471 467 1473 487 1487 502 1482 527 1470 545 1460 568 1440 588 1413 600 1370 658 1355 659 1340 648 1305 649 1275 633 1242 626 1230 570 1218 530 1190 502 1175 497 1155 500 1065 575 1045 582 1030 598 985 612 1005 640 1035 690 1042 685 1060 760 1078 825 1080 855 1096 880 1100 915 1120 960 1132 967 1143 992 1128 1020 1106 1052 1128 1074 1158 1071 1161 1103 1176 1113 1200 1187"/>
          </g>
          <!-- east and south -->
          <g class="land" transform="translate(1960 1100) scale(.42092 .53571)">
            <path d="M543 93L558 81 580 92 605 97 630 116 715 119 750 112 805 104 838 97 848 106 898 135 923 167 990 166 1015 147 1062 117 1110 101 1135 89 1190 92 1210 99 1255 97 1250 155 1263 162 1265 182 1305 201 1340 215 1347 258 1373 273 1375 290 1386 310 1394 379 1435 387 1457 402 1432 430 1425 460 1433 485 1445 494 1440 500 1410 500 1390 516 1409 552 1385 560V568L1345 572 1340 578 1265 592 1215 615 1165 622 1153 628 1125 622 1103 625 1108 641 1082 648 1100 680 1095 702 1105 705 1098 725 1079 765 1092 788 1123 802 1165 791 1215 792 1255 802 1290 799 1350 810 1365 798 1380 795 1385 785 1414 781 1412 745 1470 787 1491 822 1492 850 1500 870 1488 905 1483 942 1455 950 1425 962 1400 946 1368 947 1330 935 1322 970 1284 1020 1286 1048 1272 1062 1270 1100 1260 1125 1238 1145 1237 1169 1257 1159 1255 1195 1225 1220 1220 1232 1200 1247 1150 1305 1123 1352 1050 1410 1035 1445V1468L1043 1480 1075 1482 1095 1489 1020 1501 940 1506 865 1493 845 1485 822 1466 760 1448 750 1453 725 1446 650 1395 594 1355 534 1383 512 1392 490 1385 470 1398 450 1412 380 1403 345 1430 290 1443 270 1431 220 1431 155 1419 152 1402 142 1388 100 1367 70 1340 98 1125"/>
          </g>
          <!-- western bay, then the south-west -->
          <g class="land" transform="translate(1640 1230) scale(.35714 .44643)">
            <path class="bay" d="M93 202L100 209 140 195 158 195 180 207 238 210 255 215 300 214 348 223 385 255 412 265 420 282 433 297 435 315 450 340 457 368 468 375 461 400 500 382 540 383 555 388 614 388V511L543 553 530 590 529 625"/>
            <path d="M529 625L542 655 548 692 580 740V758L555 768 550 785 538 790 525 808 465 825 467 811 425 812 405 824 345 827 305 824 255 810 215 787 95 790 140 857 190 920 240 978 265 1015 285 1063 315 1045 350 1073 400 1082 470 1110 530 1084 575 1092 603 1102 715 1124 800 1105 930 1077 975 1060 1012 1055"/>
          </g>
          <!-- inner borders -->
          <g class="edge" transform="translate(1960 1100) scale(.42092 .53571)">
            <path d="M355 297L385 290 430 284 480 286 528 294 487 333 497 400 510 432 550 460 607 530 615 543 662 567 694 606 675 616 795 790M355 297L325 410 307 560V595L327 630 325 670 313 705 298 742 292 770 303 823"/>
            <path d="M543 93V148L500 190 445 235 437 260 430 320V352L475 415 497 465 510 545 528 590 520 660 532 750 488 835 470 882 428 920 390 950 362 992 317 1003M315 612L403 615 455 600 490 576 520 568"/>
            <path d="M298 742L390 727 460 730 540 750 620 777 660 780 720 775 795 790 862 758 865 792 1015 823 1053 770 1055 750 1095 702M303 823L350 857 385 872 418 897 428 920"/>
            <path d="M488 838L550 842 580 857 640 915 850 963 895 982 915 978 928 990 930 1005 947 1027 932 1050 940 1067 1040 1115 1085 1118 1150 1160 1235 1184 1255 1195M795 790L755 870 745 915 730 935M783 947L763 1010 570 1053 557 1093 470 1145 415 1158 370 1157"/>
            <path d="M317 1003L330 1040 328 1060 340 1080 365 1090 370 1115 362 1130 365 1155 400 1185 405 1205 420 1215 427 1233 453 1243 455 1270 487 1282 500 1320 525 1352 534 1383"/>
            <path d="M607 530L680 539 740 533 910 531 1240 535 1409 552M923 167L940 217 905 238 855 250 843 262 820 315 758 350 771 370 770 396 748 400 792 455 850 487 912 508 913 531"/>
          </g>
          <g class="edge" transform="translate(1640 1230) scale(.35714 .44643)">
            <path d="M85 83L375 170 405 168 470 145 535 126 620 128 672 135 680 146 718 145 722 90 728 85 750 87 753 96 773 96 780 165 782 145 800 131 860 131 920 145 970 145 1088 178 1088 170 1097 158 1160 152 1187 128 1205 130 1245 129 1293 134M1088 178L1123 233 1087 290V312L1120 363 1075 374 1050 368 1032 378 1045 425 1042 480 1058 503 1098 563 1060 590 1025 594 1005 620 1002 645 1050 646 1040 672 1050 690 1095 707 1165 721 1253 697"/>
            <path d="M1120 363L1258 371M1058 503L1160 514 1210 525 1265 550M1005 620L900 658 850 683 775 691 700 725 662 767 640 769 580 758M1002 645L1010 690 1002 725 1003 745 1020 764 1060 766 1100 790 1150 806 1205 865 1270 913"/>
            <path d="M1002 725L985 725 983 717 880 795 835 838 822 863 755 901 705 899 728 943 712 968 680 980 674 1025 681 1043 640 1067 603 1102M1150 806L1125 835 1080 853 1042 888 1034 915 1014 1055M1012 1062L1160 1074 1220 1067 1265 1070 1330 1097"/>
          </g>
        </svg>
      </div>
    </div>

    <footer class="status">
      <span class="lb">Coordinate</span>
      <span class="field coord">406680,4485666</span>
      <svg class="mouse" viewBox="0 0 24 24" preserveAspectRatio="none"><path d="M2 3l5-3 4 2 3-2 3 3-2 7 5 4 2 5-3 5h-8l-4-4 1-5-5-3z" fill="#222"/><path d="M5 4l4 7M9 3l3 7" stroke="#fff" stroke-width="2"/><ellipse cx="14" cy="18" rx="5" ry="4.500" fill="#fff" stroke="#000" stroke-width="1.500"/><circle cx="14" cy="18" r="1.500"/><path d="M18 6l6-5M19 9l5-4" stroke="#222" stroke-width="1.500" stroke-dasharray="2 1.500"/></svg>
      <span class="lb scale">Scale</span>
      <span class="field combo">1:212,513<i><svg viewBox="0 0 24 32"><path d="M7 12h10l-5 8z"/></svg></i></span>
      <svg class="lock" viewBox="0 0 24 32"><path d="M6 17V9q0-7 6-7t6 7v8" fill="none" stroke="#888" stroke-width="3.500"/><path d="M6.500 17V9q0-6.500 5.500-6.500t5.500 6.500v8" fill="none" stroke="#eee" stroke-width="1.200"/><rect x="1" y="16" width="22" height="15" rx="1.500" fill="#666"/></svg>
      <span class="lb mag">Magnifier</span>
      <span class="field spin">100%<i><svg viewBox="0 0 24 32"><path d="M7 10h10l-5-6zM7 22h10l-5 6z"/><path d="M0 16h24" stroke="#aaa"/></svg></i></span>
      <span class="lb rot">Rotation</span>
      <span class="field spin">0.0<i><svg viewBox="0 0 24 32"><path d="M7 10h10l-5-6zM7 22h10l-5 6z"/><path d="M0 16h24" stroke="#aaa"/></svg></i></span>
      <span class="check"><svg viewBox="0 0 24 24"><path d="M5 3l14 18M19 3L5 21" stroke="#000" stroke-width="5"/></svg></span>
      <span class="lb ren">Render</span>
      <svg class="crs" viewBox="0 0 24 24"><circle cx="12" cy="12" r="11" fill="#9b9b9b" stroke="#7d7d7d" stroke-width="1.500"/><path d="M2 8h20M2 16h20M12 1v22M7 3q-4 9 0 18M17 3q4 9 0 18" fill="none" stroke="#ccc" stroke-width="1.200"/><path d="M12 6l5 6-5 6-5-6z" fill="#eee"/></svg>
      <span class="lb user">USER:100000</span>
      <svg class="bubble" viewBox="0 0 24 24"><path d="M12 1q11 0 11 9 0 6-5 8l3 5q-6-1-8-4Q1 19 1 10q0-9 11-9z" fill="#666"/><path d="M6 10h2.500M11 10h2.500M16 10h2.500" stroke="#fff" stroke-width="2.500"/></svg>
    </footer>

    <footer class="taskbar">
      <a><svg viewBox="0 0 46 46"><path d="M8 10l12-2v14H8zM22 8l16-2v16H22zM8 24h12v14L8 36zM22 24h16v16l-16-2z" fill="#fff"/></svg></a>
      <a class="tv"><svg viewBox="0 0 46 46"><path d="M8 9v5h19V9M8 37v-5h19v5M8 18h19v10H8zM35 9v28" fill="none" stroke="#fff" stroke-width="2"/><path d="M33 17h5v5h-5z" fill="#fff"/></svg></a>
      <a><svg viewBox="0 0 46 46"><path d="M0 0h46v46H0z" fill="url(#g-tv)"/><circle cx="23" cy="23" r="20" fill="#fff"/><path d="M6 23l9-7v4h16v-4l9 7-9 7v-4H15v4z" fill="#1277d8"/></svg></a>
      <a><svg viewBox="0 0 46 46"><path d="M3 43l3-12A20 20 0 1 1 14 40z" fill="#fff"/><path d="M8 38l2-8a16 16 0 1 1 6 6z" fill="url(#g-wa)"/><path d="M16 13l4 1 1 5-2 3q3 5 7 6l3-3 5 3-1 4q-5 3-12-2-9-7-5-17z" fill="#fff"/></svg></a>
      <a class="run"><svg viewBox="0 0 46 46"><path d="M2 6h16l2 4h24v28H2z" fill="#ffe394"/><path d="M2 5h17v5H2z" fill="#ffc53a"/><path d="M10 41V24h27v17h-7v-9H17v9z" fill="#3bb1e8"/></svg></a>
      <a><svg viewBox="0 0 46 46"><rect x="2" y="7" width="42" height="31" fill="#3b3d40" stroke="#9aa3ad" stroke-width="2.500"/><path d="M3 8h40v4H3z" fill="#aab1b8"/><text x="6" y="23" font-family="Liberation Mono" font-size="9" fill="#ddd">C:\_</text></svg></a>
      <a><svg viewBox="0 0 46 46"><path d="M0 0h46v46H0z" fill="#111"/><path d="M10 0h22l13 10v24l-5 8-8 2-8-14-9-8L7 8z" fill="#e4e4e4"/><path d="M12 2l18 6-6 8-2-5 4-2zM34 2l8 10-6 4z" fill="#333"/><path d="M0 20l10 4 22 20H0z" fill="#333"/><path d="M4 22l8 4 14 16z" fill="#bbb"/><path d="M20 22l7 3-5 3z" fill="#c22"/></svg></a>
      <a><svg viewBox="0 0 46 46"><path d="M0 0h46v46H0z" fill="#8e8e8e"/><path d="M12 0h12v5H12zM0 0h10v9h8v6H0z" fill="#2a2420"/><path d="M1 44q0-14 22-14t22 14z" fill="#9fbf3b"/><path d="M0 42h46v4H0z" fill="#5e7a28"/><path d="M11 24l4 9M35 24l-4 9" stroke="#9fbf3b" stroke-width="3"/><circle cx="15" cy="38" r="2" fill="#fff"/><circle cx="31" cy="38" r="2" fill="#fff"/></svg></a>
      <a><svg viewBox="0 0 24 24"><use href="#qlogo"/></svg></a>
      <a><svg class="ad" viewBox="0 0 46 46"><rect x="2" y="3" width="42" height="40" fill="#2b0516" stroke="#e0388e" stroke-width="3"/><text x="13" y="32" fill="#f23f9a">Id</text></svg></a>
      <a><svg class="ad" viewBox="0 0 46 46"><rect x="2" y="3" width="42" height="40" fill="#0a0547" stroke="#7cc0f2" stroke-width="3"/><text x="10" y="32" fill="#84c6f7">Ps</text></svg></a>
      <a class="run"><svg class="ad" viewBox="0 0 46 46"><rect x="2" y="3" width="42" height="40" fill="#2a1503" stroke="#f7931e" stroke-width="3"/><text x="11" y="32" fill="#ffa733">Ai</text></svg></a>
      <a><svg viewBox="0 0 46 46"><g stroke="#999" stroke-width="1.500"><circle cx="23" cy="11" r="9" fill="#b3262c"/><circle cx="23" cy="35" r="9" fill="#b3262c"/><circle cx="13" cy="23" r="10" fill="#2a2a2a"/><circle cx="33" cy="23" r="10" fill="#2a2a2a"/></g><path d="M16 33V14l14 17V13" fill="none" stroke="#222" stroke-width="8"/><path d="M12 17q8-7 13 5t10 8M12 31l6 3M29 12l6 4" fill="none" stroke="#aaa" stroke-width="1.500"/></svg></a>
      <a><svg viewBox="0 0 46 46"><path d="M2 22L22 6l4 3-6 5q24-1 24 13 0 13-16 13-15 0-16-12l-8 6-2-4 12-11-10 1z" fill="#f5821f"/><circle cx="28" cy="26" r="9" fill="#fff"/><circle cx="28" cy="26" r="5.500" fill="#13518f"/></svg></a>
      <a><svg viewBox="0 0 46 46"><circle cx="23" cy="23" r="23" fill="url(#g-atom)"/><g fill="none" stroke="#e9fbef" stroke-width="1.800"><ellipse cx="23" cy="23" rx="15" ry="6"/><ellipse cx="23" cy="23" rx="15" ry="6" transform="rotate(60 23 23)"/><ellipse cx="23" cy="23" rx="15" ry="6" transform="rotate(120 23 23)"/></g><circle cx="23" cy="23" r="2" fill="#fff"/></svg></a>
      <a><svg viewBox="0 0 24 24"><use href="#mana"/></svg></a>
      <a class="run"><svg viewBox="0 0 46 46"><circle cx="23" cy="23" r="21" fill="#1fa15d"/><path d="M4 13A21 21 0 0 1 42.500 15H23l-8.500 13z" fill="#dd4b3e"/><path d="M23 15h19.500A21 21 0 0 1 22 44l9.500-16z" fill="#ffcd42"/><circle cx="23" cy="23" r="9.500" fill="#fff"/><circle cx="23" cy="23" r="7.800" fill="#4c8bf5"/></svg></a>
      <a><svg viewBox="0 0 46 46"><circle cx="23" cy="23" r="21" fill="#1ed760"/><path d="M11 17q13-4 25 3M12 24q12-3 21 3M13 31q10-3 18 2" fill="none" stroke="#111" stroke-width="3.800" stroke-linecap="round"/></svg></a>
      <a class="run"><svg viewBox="0 0 46 46"><path d="M6 6h34v34H6z" fill="#fff"/><path d="M40 23H25v17z" fill="#20170f"/></svg></a>
      <a class="run cur"><svg viewBox="0 0 24 24"><use href="#qlogo"/></svg></a>
      <svg class="tray" viewBox="2620 1994 300 77"><g fill="none" stroke="#fff" stroke-width="2.200"><circle cx="2648" cy="2023" r="5"/><path d="M2642 2033q2-5 6-5 6 0 7 9"/><circle cx="2637" cy="2034" r="5"/><path d="M2629 2046q1-8 8-8 6 0 8 8M2700 2038l11-12 11 12M2744 2025h26v15h-26zM2771 2029v6"/><path d="M2880 2028v8h5l6 6v-20l-6 6zM2895 2026q4 6 0 12M2900 2023q6 9 0 18"/><path d="M2906 2020q7 12 0 24" stroke="#888"/><path d="M2842 2045q1-22 21-24M2847 2045q1-15 16-17M2852 2045q1-9 11-10" stroke-width="1.800"/></g><path d="M2747 2028h7v9h-7zM2857 2040h5v5h-5z" fill="#fff"/><path d="M2790 2041q-4-7 3-9-1-8 7-9 8 0 9 6 6 2 5 8l-4 5z" fill="#fff"/><circle cx="2809" cy="2039" r="9" fill="#eef5fc"/><path d="M2803 2038q1-6 9-4M2815 2040q-1 6-9 4" stroke="#1c66c9" stroke-width="3" fill="none"/></svg>
      <span class="lang">CAT</span>
      <span class="clock"><span>12:10</span><span>02/07/2018</span></span>
      <svg class="notif" viewBox="0 0 50 50"><path d="M1 2h31v27H18l-7 7v-7H1z" fill="#fff"/><path d="M7 9h20M7 15h20M7 21h14" stroke="#20170f" stroke-width="2.300"/><circle cx="31" cy="32" r="14" fill="#2c2b2a" stroke="#8d8a86" stroke-width="2"/><text x="25" y="40" font-family="Open Sans" font-weight="600" font-size="21" fill="#fff">2</text></svg>
      <i class="peek"></i>
    </footer>
  </section>

  <div class="frame"></div>
  <div class="note">
    <svg width="330" height="190"><text x="0" y="47" textLength="305" lengthAdjust="spacingAndGlyphs">aparece en el</text><text x="0" y="107" textLength="197" lengthAdjust="spacingAndGlyphs">panel de</text><text x="0" y="167" textLength="134" lengthAdjust="spacingAndGlyphs">capas</text></svg>
  </div>
</main>
</body>
</html>
```
FILE: styles.css
```css
* { box-sizing: border-box; }
body { margin: 0; background: #fff; font: 19px/1.2 "DejaVu Sans Condensed", "DejaVu Sans", sans-serif; font-stretch: condensed; color: #000; }
svg { display: block; flex: none; }
.defs { position: absolute; width: 0; height: 0; }
.page { position: relative; width: 3508px; height: 2480px; border: 2px solid #2c3e57; padding: 102px 0 0 276px; overflow: hidden; }
.banner { margin: 0; width: 1208px; height: 138px; background: #0ff; }
.banner text, .note text { font-family: "Noto Sans", "Open Sans", sans-serif; font-weight: 700; font-style: italic; fill: #2c3e57; }
.note text { font-size: 50px; }

.window { margin-top: 170px; width: 2953px; height: 1659px; display: flex; flex-direction: column; background: #efefef; }
.titlebar { height: 44px; background: #fff; display: flex; align-items: center; padding: 0 0 4px 7px; font: 23.5px "Open Sans", sans-serif; letter-spacing: -1.1px; }
.logo { width: 24px; height: 38px; margin-right: 11px; }
.controls { width: 220px; height: 40px; margin: 0 29px 0 auto; }

.menubar { height: 39px; border-bottom: 2px solid #b5b5b5; display: grid; grid-template-columns: 84px 55px 67px 71px 94px 84px 79px 79px 105px 61px 100px 116px 60px; padding-left: 16px; line-height: 38px; white-space: nowrap; letter-spacing: -.05px; }

.toolbar { height: 60px; border-bottom: 2px solid #b5b5b5; border-top: 1px solid #fafafa; display: flex; align-items: center; }
.toolbar b { width: 54px; height: 52px; display: flex; align-items: center; justify-content: center; }
.toolbar b > svg { width: 36px; height: 37px; }
.toolbar b.on { border: 2px solid #8a8a8a; border-radius: 4px; background: #d2d2d2; width: 52px; margin: 0 1px; }
.toolbar u { width: 23px; padding-left: 1px; }
.toolbar u svg { width: 14px; height: 10px; }
.off { color: #999; }
.grip { width: 20px; height: 46px; flex: none; background:
  radial-gradient(circle at 2px 2px, #bbb 1.5px, transparent 2px) 12px 0 / 4px 8px,
  radial-gradient(circle at 2px 2px, #bbb 1.5px, transparent 2px) 17px 4px / 4px 8px; background-repeat: repeat-y; }
.grip.first { margin-left: -3px; }
.grip.wide { margin-left: 1px; }
.tile text { font: 13.5px "Open Sans", sans-serif; fill: #fff; }
.tile .dim { fill: #8a8a30; }

.workspace { display: flex; height: 1327px; }
.sidebar { width: 84px; flex: none; display: flex; flex-direction: column; }
.sidebar div { height: 52.6px; padding-left: 12px; display: flex; align-items: center; }
.sidebar div > svg:first-child { width: 38px; height: 38px; }
.sidebar .car { width: 14px; height: 9px; margin-left: 10px; }
.sidebar .notes { padding-left: 22px; height: 52px; }
.hgrip { height: 8px; margin: 9px 4px -2px; flex: none; background:
  radial-gradient(circle at 2px 2px, #bbb 1.5px, transparent 2px) 0 0 / 8px 4px repeat-x,
  radial-gradient(circle at 2px 2px, #bbb 1.5px, transparent 2px) 4px 4px / 8px 4px repeat-x; }
.sidebar div + .hgrip { margin: 13px 4px 0; }

.dock { width: 520px; flex: none; border-left: 2px solid #b5b5b5; display: flex; flex-direction: column; background: linear-gradient(#c9c9c9, #c9c9c9) 515px 545px / 2px 330px no-repeat, #efefef; }
.panel { width: 509px; display: flex; flex-direction: column; }
.panel header { height: 30px; display: flex; align-items: center; padding: 2px 1px 0 4px; gap: 4px; flex: none; }
.panel header span { white-space: nowrap; padding: 4px 10px 0; letter-spacing: -.4px; }
.dots { flex: 1; height: 8px; background:
  radial-gradient(circle at 2px 2px, #bbb 1.5px, transparent 2px) 0 0 / 8px 4px repeat-x,
  radial-gradient(circle at 2px 2px, #bbb 1.5px, transparent 2px) 4px 4px / 8px 4px repeat-x; }
.pb { width: 22px; height: 22px; }
.ptools { display: flex; align-items: center; padding-left: 10px; gap: 16px; height: 52px; flex: none; }
.ptools svg { width: 26px; height: 26px; }
.ptools .car { width: 14px; height: 9px; margin: 0 -3px 0 -8px; }
.bookmarks { height: 536px; }
.table { border: 3px solid #4a9bf0; height: 453px; background: #fff; overflow: hidden; display: flex; flex-direction: column; }
.thead { display: grid; grid-template-columns: 154px 154px 153px 90px; height: 40px; }
.thead span { border-right: 3px solid #888; border-bottom: 2px solid #888; border-top: 1px solid #888; background: linear-gradient(#fdfdfd, #e4e4e4); padding: 8px 0 0 6px; }
.tbody { flex: 1; }
.scroll { height: 26px; display: flex; border-top: 2px solid #888; }
.sb { width: 25px; height: 24px; border: 1px solid #888; background: linear-gradient(#fff, #e6e6e6); }
.thumb { width: 174px; border: 2px solid #888; border-left-width: 1px; background: linear-gradient(#fff, #e2e2e2); display: flex; align-items: center; justify-content: center; }
.thumb em { width: 30px; height: 16px; background: radial-gradient(circle at 2px 2px, #aaa 1.3px, transparent 2px) 0 0 / 5px 6px; }
.track { flex: 1; background: repeating-conic-gradient(#dcdcdc 0 25%, #fafafa 0 50%) 0 0 / 4px 4px; }
.layers { height: 791px; padding-top: 9px; }
.layers .ptools { height: 52px; }
.tree { flex: 1; border: 2px solid #b5b5b5; border-top-width: 3px; background: #fff; }
.layer { height: 25px; background: #efefef; display: flex; align-items: center; }
.branch { width: 14px; height: 13px; border: 1px dotted #999; border-width: 0 0 1px 1px; margin: 0 5px 10px 17px; }
.check { width: 24px; height: 24px; border: 1px solid #999; background: #fafafa; flex: none; }
.swatch { width: 28px; height: 24px; margin: 0 9px; background: #29c5e6; border: 1px solid #1c7fa0; }
.lname { font-weight: 700; font-size: 19px; text-decoration: underline; text-decoration-thickness: 2px; letter-spacing: .4px; }

.canvas { flex: 1; border: 2px solid #b5b5b5; border-width: 1px 2px 2px; background: #fff; overflow: hidden; }
.core { fill: #26dbd8; stroke: #26dbd8; stroke-width: 3px; }
.land path { fill: #26dbd8; stroke: #000; stroke-width: 2.1px; stroke-linejoin: round; vector-effect: non-scaling-stroke; }
.land .bay { fill: #fff; }
.edge path { fill: none; stroke: #000; stroke-width: 2.1px; stroke-linejoin: round; vector-effect: non-scaling-stroke; }

.status { height: 52px; display: flex; align-items: center; padding: 2px 0 0 1318px; white-space: nowrap; }
.field { height: 33px; border: 2px solid #b5b5b5; border-radius: 4px; background: #fff; line-height: 30px; padding-left: 6px; position: relative; display: flex; justify-content: space-between; flex: none; }
.field i { width: 24px; border-left: 1px solid #aaa; background: linear-gradient(#fff, #e0e0e0); }
.field i svg { width: 23px; height: 29px; }
.lb { letter-spacing: -.1px; flex: none; }
.lb:first-child { width: 99px; }
.coord { width: 393px; justify-content: center; padding: 0; }
.mouse { width: 30px; height: 32px; margin: 0 0 0 8px; }
.scale { width: 52px; margin-left: 23px; }
.combo { width: 150px; }
.lock { width: 24px; height: 32px; margin: 0 26px 0 11px; }
.mag { width: 85px; }
.spin { width: 124px; }
.rot { width: 86px; margin-left: 15px; }
.status .check { margin: 0 10px 0 11px; }
.ren { width: 90px; }
.crs { width: 30px; height: 30px; margin-right: 7px; }
.user { width: 119px; }
.bubble { width: 32px; height: 30px; margin-left: 36px; }

.taskbar { height: 77px; background: #20170f; display: flex; align-items: center; color: #fff; font: 22.5px "Open Sans", sans-serif; }
.taskbar a { width: 78px; height: 77px; margin-right: 17.4px; flex: none; display: flex; align-items: center; justify-content: center; border-bottom: 5px solid transparent; padding-top: 4px; }
.taskbar a:first-child { margin: 0 13px 0 8px; }
.taskbar a.tv { margin: 0 21px 0 0; }
.taskbar a svg { width: 46px; height: 46px; }
.taskbar a:first-child svg { width: 44px; height: 44px; }
.taskbar a.run { border-bottom-color: #74b5ea; }
.taskbar a.cur { width: 94px; margin: 0 0 0 -8px; background: #4b453f; border-bottom-color: #74b5ea; }
.ad text { font: 600 24px "Open Sans", sans-serif; }
.tray { width: 300px; height: 77px; margin-left: auto; }
.lang { width: 41px; margin: 0 27px 0 12px; letter-spacing: -.9px; }
.clock { width: 118px; display: flex; flex-direction: column; align-items: center; line-height: 35px; letter-spacing: -.7px; }
.notif { width: 50px; height: 50px; margin: 4px 21px 0 34px; }
.peek { width: 1px; height: 77px; background: #8a8580; margin-right: 8px; }

.frame { position: absolute; left: 345px; top: 1149px; width: 549px; height: 439px; border: 12px solid #2c3e57; }
.note { position: absolute; left: 955px; top: 1148px; }
```
